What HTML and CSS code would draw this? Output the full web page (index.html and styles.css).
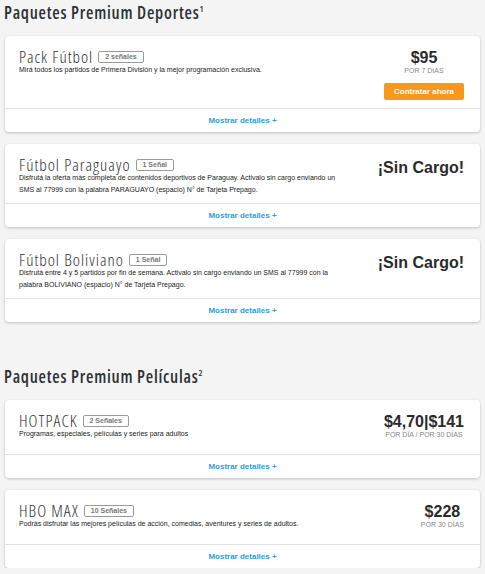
FILE: index.html
```html
<!DOCTYPE html>
<html lang="es">
<head>
<meta charset="utf-8">
<title>Paquetes Premium</title>
<link rel="stylesheet" href="styles.css">
</head>
<body>
<section class="section">
  <h2 class="section-title">Paquetes Premium Deportes<sup>1</sup></h2>
  <div class="cards">
    <article class="card">
      <div class="card-body">
        <div class="info">
          <div class="title-row"><h3 class="title">Pack Fútbol</h3><span class="badge">2 señales</span></div>
          <p class="desc">Mirá todos los partidos de Primera División y la mejor programación exclusiva.</p>
        </div>
        <div class="price-col">
          <div class="price">$95</div>
          <div class="period">POR 7 DIAS</div>
          <button class="buy">Contratar ahora</button>
        </div>
      </div>
      <div class="card-foot">Mostrar detalles +</div>
    </article>
    <article class="card">
      <div class="card-body">
        <div class="info">
          <div class="title-row"><h3 class="title">Fútbol Paraguayo</h3><span class="badge">1 Señal</span></div>
          <p class="desc">Disfrutá la oferta más completa de contenidos deportivos de Paraguay. Activalo sin cargo enviando un SMS al 77999 con la palabra PARAGUAYO (espacio) N° de Tarjeta Prepago.</p>
        </div>
        <div class="price-col">
          <div class="price free">¡Sin Cargo!</div>
        </div>
      </div>
      <div class="card-foot">Mostrar detalles +</div>
    </article>
    <article class="card">
      <div class="card-body">
        <div class="info">
          <div class="title-row"><h3 class="title">Fútbol Boliviano</h3><span class="badge">1 Señal</span></div>
          <p class="desc">Disfrutá entre 4 y 5 partidos por fin de semana. Activalo sin cargo enviando un SMS al 77999 con la palabra BOLIVIANO (espacio) N° de Tarjeta Prepago.</p>
        </div>
        <div class="price-col">
          <div class="price free">¡Sin Cargo!</div>
        </div>
      </div>
      <div class="card-foot">Mostrar detalles +</div>
    </article>
  </div>
</section>
<section class="section section-next">
  <h2 class="section-title">Paquetes Premium Películas<sup>2</sup></h2>
  <div class="cards">
    <article class="card">
      <div class="card-body">
        <div class="info">
          <div class="title-row"><h3 class="title">HOTPACK</h3><span class="badge">2 Señales</span></div>
          <p class="desc">Programas, especiales, películas y series para adultos</p>
        </div>
        <div class="price-col">
          <div class="price">$4,70|$141</div>
          <div class="period">POR DÍA / POR 30 DÍAS</div>
        </div>
      </div>
      <div class="card-foot">Mostrar detalles +</div>
    </article>
    <article class="card">
      <div class="card-body">
        <div class="info">
          <div class="title-row"><h3 class="title">HBO MAX</h3><span class="badge">10 Señales</span></div>
          <p class="desc">Podrás disfrutar las mejores películas de acción, comedias, aventures y series de adultos.</p>
        </div>
        <div class="price-col">
          <div class="price">$228</div>
          <div class="period">POR 30 DÍAS</div>
        </div>
      </div>
      <div class="card-foot">Mostrar detalles +</div>
    </article>
  </div>
</section>
</body>
</html>
```
FILE: styles.css
```css
* { box-sizing: border-box; }
html, body { margin: 0; padding: 0; }
body {
  background: #f4f4f4;
  font-family: "Liberation Sans", Arial, sans-serif;
  color: #333;
  padding: 3px 5px 0 5px;
  width: 485px;
}
.section-next { margin-top: 45px; }
.section-title {
  margin: 0 0 13px -1px;
  font-family: "Open Sans", "DejaVu Sans Condensed", sans-serif;
  font-weight: 600;
  font-stretch: 75%;
  font-size: 17px;
  letter-spacing: 0.75px;
  line-height: 20px;
  color: #2e3236;
}
.section-title sup {
  font-size: 9px;
  letter-spacing: 0;
  vertical-align: top;
  line-height: 9px;
  position: relative;
  top: 1px;
}
.cards { display: flex; flex-direction: column; gap: 12px; }
.card {
  background: #fff;
  border-radius: 4px;
  box-shadow: 0 1px 3px rgba(0,0,0,0.22);
}
.card-body {
  display: flex;
  justify-content: space-between;
  align-items: flex-start;
  padding: 13px 16px 7px 14px;
}
.info { width: 325px; }
.title-row { display: flex; align-items: center; }
.title {
  margin: 0;
  font-family: "Open Sans", "DejaVu Sans Condensed", sans-serif;
  font-stretch: 75%;
  font-weight: 300;
  font-size: 17px;
  letter-spacing: 1px;
  line-height: 15px;
  color: #333;
}
.badge {
  margin-left: 5px;
  height: 12px;
  padding: 0 6px;
  border: 1px solid #9a9a9a;
  border-radius: 2px;
  font-size: 7px;
  font-weight: bold;
  line-height: 10px;
  color: #777;
}
.desc {
  margin: 0;
  font-size: 7px;
  line-height: 12px;
  color: #222;
}
.price-col { text-align: center; }
.price {
  font-weight: bold;
  font-size: 16px;
  line-height: 17px;
  color: #2b2b2b;
}
.price.free { padding-top: 2px; }
.period {
  font-size: 7px;
  line-height: 10px;
  color: #888;
  margin-bottom: 7px;
}
.buy {
  display: block;
  width: 80px;
  height: 17px;
  margin: 0 0 1px 0;
  padding: 0;
  border: 0;
  border-radius: 2px;
  background: #f7971e;
  color: #fff;
  font-family: "Liberation Sans", Arial, sans-serif;
  font-weight: bold;
  font-size: 8px;
}
.card-foot {
  height: 24px;
  border-top: 1px solid #e2e2e2;
  text-align: center;
  font-size: 8px;
  font-weight: bold;
  line-height: 23px;
  color: #2a9fe6;
}
```
